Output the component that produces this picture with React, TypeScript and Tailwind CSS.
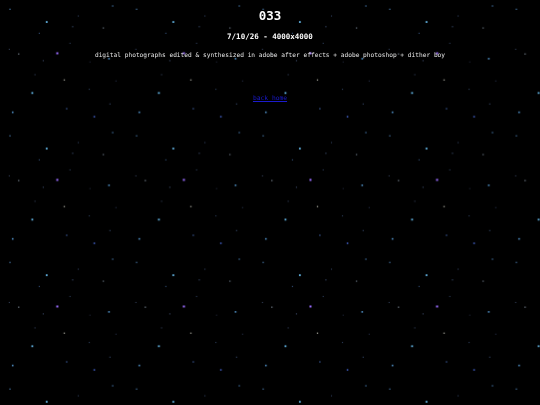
import React from 'react';

type Star = { x: number; y: number; c: string; s: number };

// one tile of the repeating star field, ~126.6px square
const stars: Star[] = [
  { x: 10, y: 9.3, c: '#3f6a96', s: 1.3 },
  { x: 112.7, y: 6, c: '#4070a0', s: 1.3 },
  { x: 46.7, y: 22, c: '#62b4e4', s: 1.8 },
  { x: 78.3, y: 16, c: '#34486a', s: 1 },
  { x: 72.7, y: 26.7, c: '#3a4e70', s: 1.1 },
  { x: 103.3, y: 28, c: '#5a6470', s: 1.3 },
  { x: 39.3, y: 33.3, c: '#33507a', s: 1.1 },
  { x: 70, y: 43.3, c: '#34486a', s: 1 },
  { x: 9.3, y: 49.3, c: '#3a4866', s: 1 },
  { x: 18.7, y: 54, c: '#6a7480', s: 1.3 },
  { x: 57.3, y: 53.3, c: '#9a6cff', s: 2 },
  { x: 43.3, y: 60.7, c: '#3a4866', s: 1.1 },
  { x: 109, y: 58.7, c: '#4e8ec4', s: 1.6 },
  { x: 35, y: 74.7, c: '#3a4866', s: 1 },
  { x: 64.3, y: 80, c: '#9a9a90', s: 1.3 },
  { x: 89.3, y: 89.3, c: '#34486a', s: 1 },
  { x: 116, y: 81, c: '#2a3452', s: 1 },
  { x: 32.3, y: 93, c: '#62b4e4', s: 1.8 },
  { x: 12.7, y: 112.3, c: '#4e8ec4', s: 1.6 },
  { x: 66.7, y: 108.7, c: '#3a5a9a', s: 1.3 },
  { x: 94.3, y: 116.7, c: '#4464d0', s: 1.5 },
  { x: 110, y: 104, c: '#34486a', s: 1.1 },
  { x: 90, y: 62, c: '#222a40', s: 1 },
];

const mono = '"DejaVu Sans Mono", "Liberation Mono", monospace';

function StarField() {
  return (
    <svg className="absolute inset-0 h-full w-full" aria-hidden="true">
      <defs>
        <pattern id="stars" width="126.6" height="126.6" patternUnits="userSpaceOnUse">
          {stars.map((st, i) => (
            <rect
              key={i}
              x={st.x - st.s / 2}
              y={st.y - st.s / 2}
              width={st.s}
              height={st.s}
              fill={st.c}
            />
          ))}
        </pattern>
      </defs>
      <rect width="100%" height="100%" fill="url(#stars)" />
    </svg>
  );
}

export default function App() {
  return (
    <div className="relative h-[405px] w-[540px] overflow-hidden bg-black" style={{ fontFamily: mono }}>
      <StarField />
      <div className="relative flex flex-col items-center text-white opacity-[0.99] [will-change:transform]">
        <h1 className="mt-[10px] text-[12.5px] font-bold leading-[12px]">033</h1>
        <h3 className="mt-[11px] text-[7.5px] font-bold leading-[8px]">7/10/26 - 4000x4000</h3>
        <p className="mt-[9.5px] text-[6.2px] leading-[7px] text-[#e8e8e8]">
          digital photographs edited &amp; synthesized in adobe after effects + adobe photoshop + dither boy
        </p>
        <a href="#" className="mt-[36px] text-[6.3px] leading-[7px] text-[#1c1cd0] underline">
          back home
        </a>
      </div>
    </div>
  );
}
